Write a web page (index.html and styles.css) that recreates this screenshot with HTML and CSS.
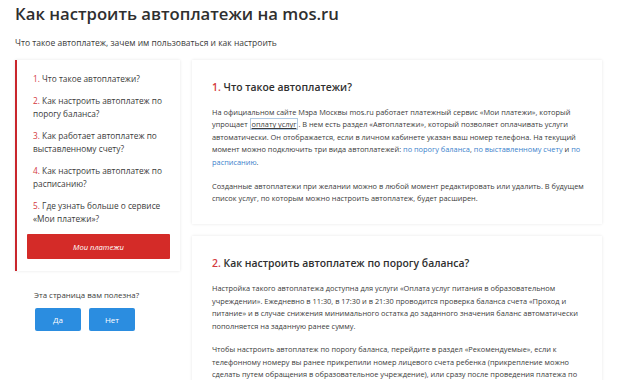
FILE: index.html
```html
<!DOCTYPE html>
<html lang="ru">
<head>
  <meta charset="UTF-8" />
  <title>Как настроить автоплатежи на mos.ru</title>
  <link rel="stylesheet" href="styles.css">
</head>
<body>
  <h1 class="title">Как настроить автоплатежи на mos.ru</h1>
  <p class="lead">Что такое автоплатеж, зачем им пользоваться и как настроить</p>

  <div class="layout">
    <div class="aside">
      <div class="menu">
        <ol class="menu-list">
          <li><span class="num">1.</span> Что такое автоплатежи?</li>
          <li><span class="num">2.</span> Как настроить автоплатеж по порогу баланса?</li>
          <li><span class="num">3.</span> Как работает автоплатеж по выставленному счету?</li>
          <li><span class="num">4.</span> Как настроить автоплатеж по расписанию?</li>
          <li><span class="num">5.</span> Где узнать больше о сервисе «Мои платежи»?</li>
        </ol>
        <button class="btn-red" type="button">Мои платежи</button>
      </div>

      <div class="feedback">
        <p>Эта страница вам полезна?</p>
        <div class="feedback-btns">
          <button class="btn-blue" type="button">Да</button>
          <button class="btn-blue" type="button">Нет</button>
        </div>
      </div>
    </div>

    <div class="content">
      <div class="card">
        <h2><span class="num">1.</span> Что такое автоплатежи?</h2>
        <p>На официальном сайте Мэра Москвы mos.ru работает платежный сервис «Мои платежи», который упрощает <span class="boxed">оплату услуг</span>. В нем есть раздел «Автоплатежи», который позволяет оплачивать услуги автоматически. Он отображается, если в личном кабинете указан ваш номер телефона. На текущий момент можно подключить три вида автоплатежей: <a href="#">по порогу баланса</a>, <a href="#">по выставленному счету</a> и <a href="#">по расписанию</a>.</p>
        <p>Созданные автоплатежи при желании можно в любой момент редактировать или удалить. В будущем список услуг, по которым можно настроить автоплатеж, будет расширен.</p>
      </div>

      <div class="card">
        <h2><span class="num">2.</span> Как настроить автоплатеж по порогу баланса?</h2>
        <p>Настройка такого автоплатежа доступна для услуги «Оплата услуг питания в образовательном учреждении». Ежедневно в 11:30, в 17:30 и в 21:30 проводится проверка баланса счета «Проход и питание» и в случае снижения минимального остатка до заданного значения баланс автоматически пополняется на заданную ранее сумму.</p>
        <p>Чтобы настроить автоплатеж по порогу баланса, перейдите в раздел «Рекомендуемые», если к телефонному номеру вы ранее прикрепили номер лицевого счета ребенка (прикрепление можно сделать путем обращения в образовательное учреждение), или сразу после проведения платежа по услуге.</p>
      </div>
    </div>
  </div>
</body>
</html>
```

FILE: styles.css
```css
body {
  font-family: "Open Sans", "Noto Sans", sans-serif;
  color: #3b3b3b;
  background: #fff;
  margin: 0;
  padding: 0 15px;
  overflow: hidden;
}

.title {
  margin: 0;
  padding-top: 3px;
  font-size: 16.7px;
  font-weight: 600;
  line-height: 21px;
  color: #2f2f2f;
}

.lead {
  margin: 13px 0 0;
  font-size: 8.5px;
  line-height: 12px;
}

.layout {
  display: flex;
  align-items: flex-start;
  gap: 12px;
  margin-top: 11px;
}

.aside {
  width: 165px;
  flex-shrink: 0;
}

.menu {
  border-left: 2px solid #c9262c;
  box-shadow: 0 0 3px rgba(0, 0, 0, 0.1);
  padding: 12px 10px 12px 10px;
}

.menu-list {
  list-style: none;
  margin: 0;
  padding: 0 3px 0 6px;
}

.menu-list li {
  font-size: 8.3px;
  line-height: 13px;
  margin-bottom: 9px;
}

.num {
  color: #d43a3e;
}

.btn-red {
  display: block;
  width: 100%;
  height: 25px;
  margin-top: 2px;
  border: 0;
  border-radius: 1px;
  background: #d42b28;
  color: #fff;
  font-family: inherit;
  font-size: 7.6px;
  font-style: italic;
}

.feedback {
  padding-left: 19px;
  margin-top: 18px;
}

.feedback p {
  margin: 0;
  font-size: 7.9px;
  line-height: 12px;
}

.feedback-btns {
  display: flex;
  gap: 8px;
  margin-top: 7px;
  padding-left: 1px;
}

.btn-blue {
  width: 46px;
  height: 23px;
  border: 0;
  border-radius: 2px;
  background: #2b8de0;
  color: #fff;
  font-family: inherit;
  font-size: 8px;
}

.content {
  flex: 1;
  padding-right: 3px;
}

.card {
  box-shadow: 0 0 3px rgba(0, 0, 0, 0.1);
  padding: 19px 18px 20px 20px;
  margin-bottom: 12px;
}

.card h2 {
  margin: 0 0 11px;
  font-size: 10.4px;
  font-weight: 600;
  line-height: 16px;
  color: #2f2f2f;
}

.card p {
  margin: 0 0 11.5px;
  font-size: 7.4px;
  line-height: 12.4px;
}

.card p:last-child {
  margin-bottom: 0;
}

.card a {
  color: #3a82cc;
  text-decoration: none;
}

.boxed {
  border: 1px solid #b3cbe3;
  padding: 0 1px;
  text-decoration: underline;
}
```
